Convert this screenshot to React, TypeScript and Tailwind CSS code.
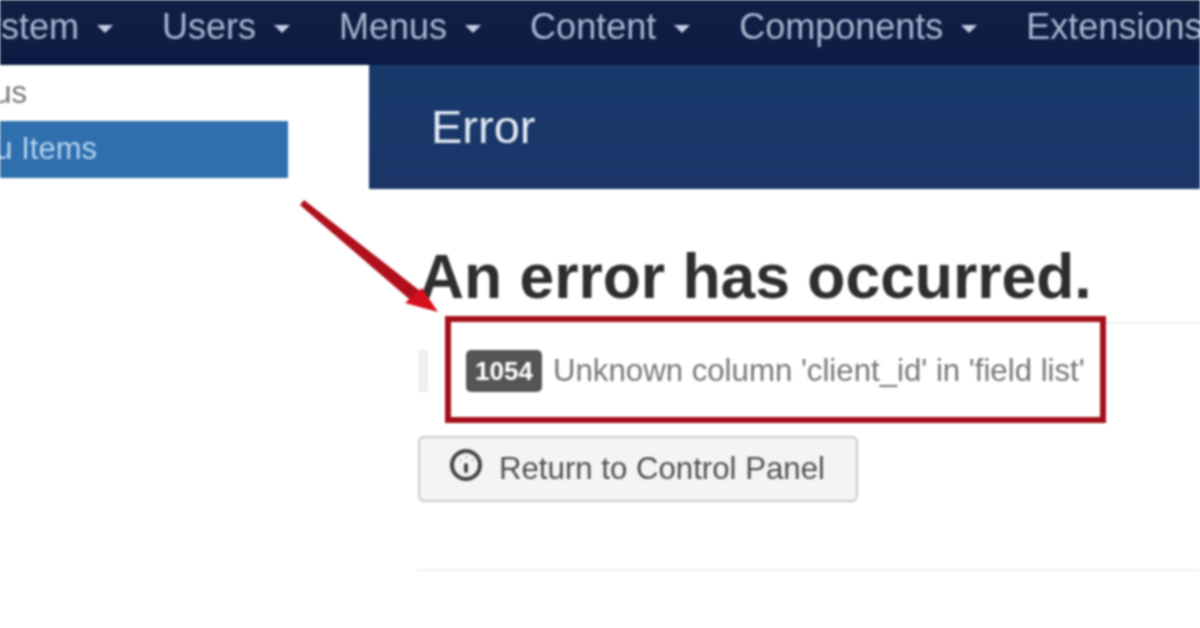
const navItems = ["System", "Users", "Menus", "Content", "Components", "Extensions"]

function Caret() {
  return (
    <svg width="16" height="8" viewBox="0 0 16 8" className="mt-[4px] ml-[18px] mr-[49px] shrink-0">
      <path d="M0 0 H16 L8 8 Z" fill="#c3cde2" />
    </svg>
  )
}

function DashIcon() {
  return (
    <svg width="34" height="34" viewBox="0 0 34 34" className="shrink-0 -mt-[8px]" fill="none">
      <circle cx="17" cy="17" r="14" stroke="#444" strokeWidth="4" />
      <path d="M17 17 V23" stroke="#444" strokeWidth="4" strokeLinecap="round" />
      <path d="M11 12 h1 M17 9 h1 M23 12 h1" stroke="#777" strokeWidth="2" />
    </svg>
  )
}

export default function App() {
  return (
    <div className="relative w-[1200px] h-[628px] overflow-hidden bg-white blur-[0.8px] font-['Liberation_Sans',Arial,sans-serif]">

      {/* top nav */}
      <div className="h-[65px] bg-gradient-to-b from-[#111f44] to-[#0b1c44] flex items-center pb-[12px] -ml-[41px] w-[1300px] text-[36px] text-[#a9b5cf] whitespace-nowrap">
        {navItems.map((item) => (
          <div key={item} className="flex items-center shrink-0">
            <span>{item}</span>
            {item !== "Extensions" && <Caret />}
          </div>
        ))}
      </div>

      <div className="flex h-[563px]">

        {/* sidebar */}
        <div className="w-[369px] shrink-0 overflow-hidden">
          <div className="h-[56px] w-[288px] flex items-center justify-end pr-[261px] text-[31px] text-[#777] whitespace-nowrap">
            Menus
          </div>
          <div className="h-[57px] w-[288px] flex items-center justify-end pr-[191px] text-[31px] text-[#b4d3ee] whitespace-nowrap bg-[#2f6fae]">
            Menu Items
          </div>
        </div>

        {/* main */}
        <div className="flex-1 min-w-0">
          <div className="h-[124px] bg-gradient-to-b from-[#193a6c] to-[#1b3569] flex items-center pl-[62px] text-[47px] text-[#dfe8f3]">
            Error
          </div>

          <div className="pl-[49px] relative">
            <h1 className="mt-[51px] ml-[1px] text-[62.4px] leading-[74px] font-bold text-[#2e2e2e] whitespace-nowrap">
              An error has occurred.
            </h1>

            <div className="mt-[36px] flex items-center h-[42px]">
              <div className="w-[10px] h-full bg-[#efefef]" />
              <span className="ml-[38px] w-[76px] h-full rounded-[5px] bg-[#555] text-white font-bold text-[26px] flex items-center justify-center">
                1054
              </span>
              <span className="ml-[11px] text-[31.2px] text-[#777] whitespace-nowrap">
                Unknown column 'client_id' in 'field list'
              </span>
            </div>

            <button className="mt-[44px] w-[440px] h-[66px] rounded-[6px] border-2 border-[#c9c9c9] bg-[#f4f4f4] flex items-center pl-[29px] text-[31.2px] text-[#505050] whitespace-nowrap">
              <DashIcon />
              <span className="ml-[16px]">Return to Control Panel</span>
            </button>

            <div className="mt-[67px] h-[2px] bg-[#f1f1f1] -ml-[2px]" />
          </div>
        </div>
      </div>

      {/* annotation overlay */}
      <div className="absolute left-[1105px] top-[322px] w-[95px] h-[2px] bg-[#efefef]" />
      <div className="absolute left-[445px] top-[316px] w-[661px] h-[107px] border-[6px] border-[#a50f1a]" />
      <svg className="absolute left-[295px] top-[195px]" width="150" height="125" viewBox="0 0 150 125" fill="none">
        <path d="M5 10 L9 5 L129 99 L120 109 Z" fill="#b0101b" />
        <path d="M143 117 L110 108 L127 93 Z" fill="#d5101c" />
      </svg>
    </div>
  )
}
